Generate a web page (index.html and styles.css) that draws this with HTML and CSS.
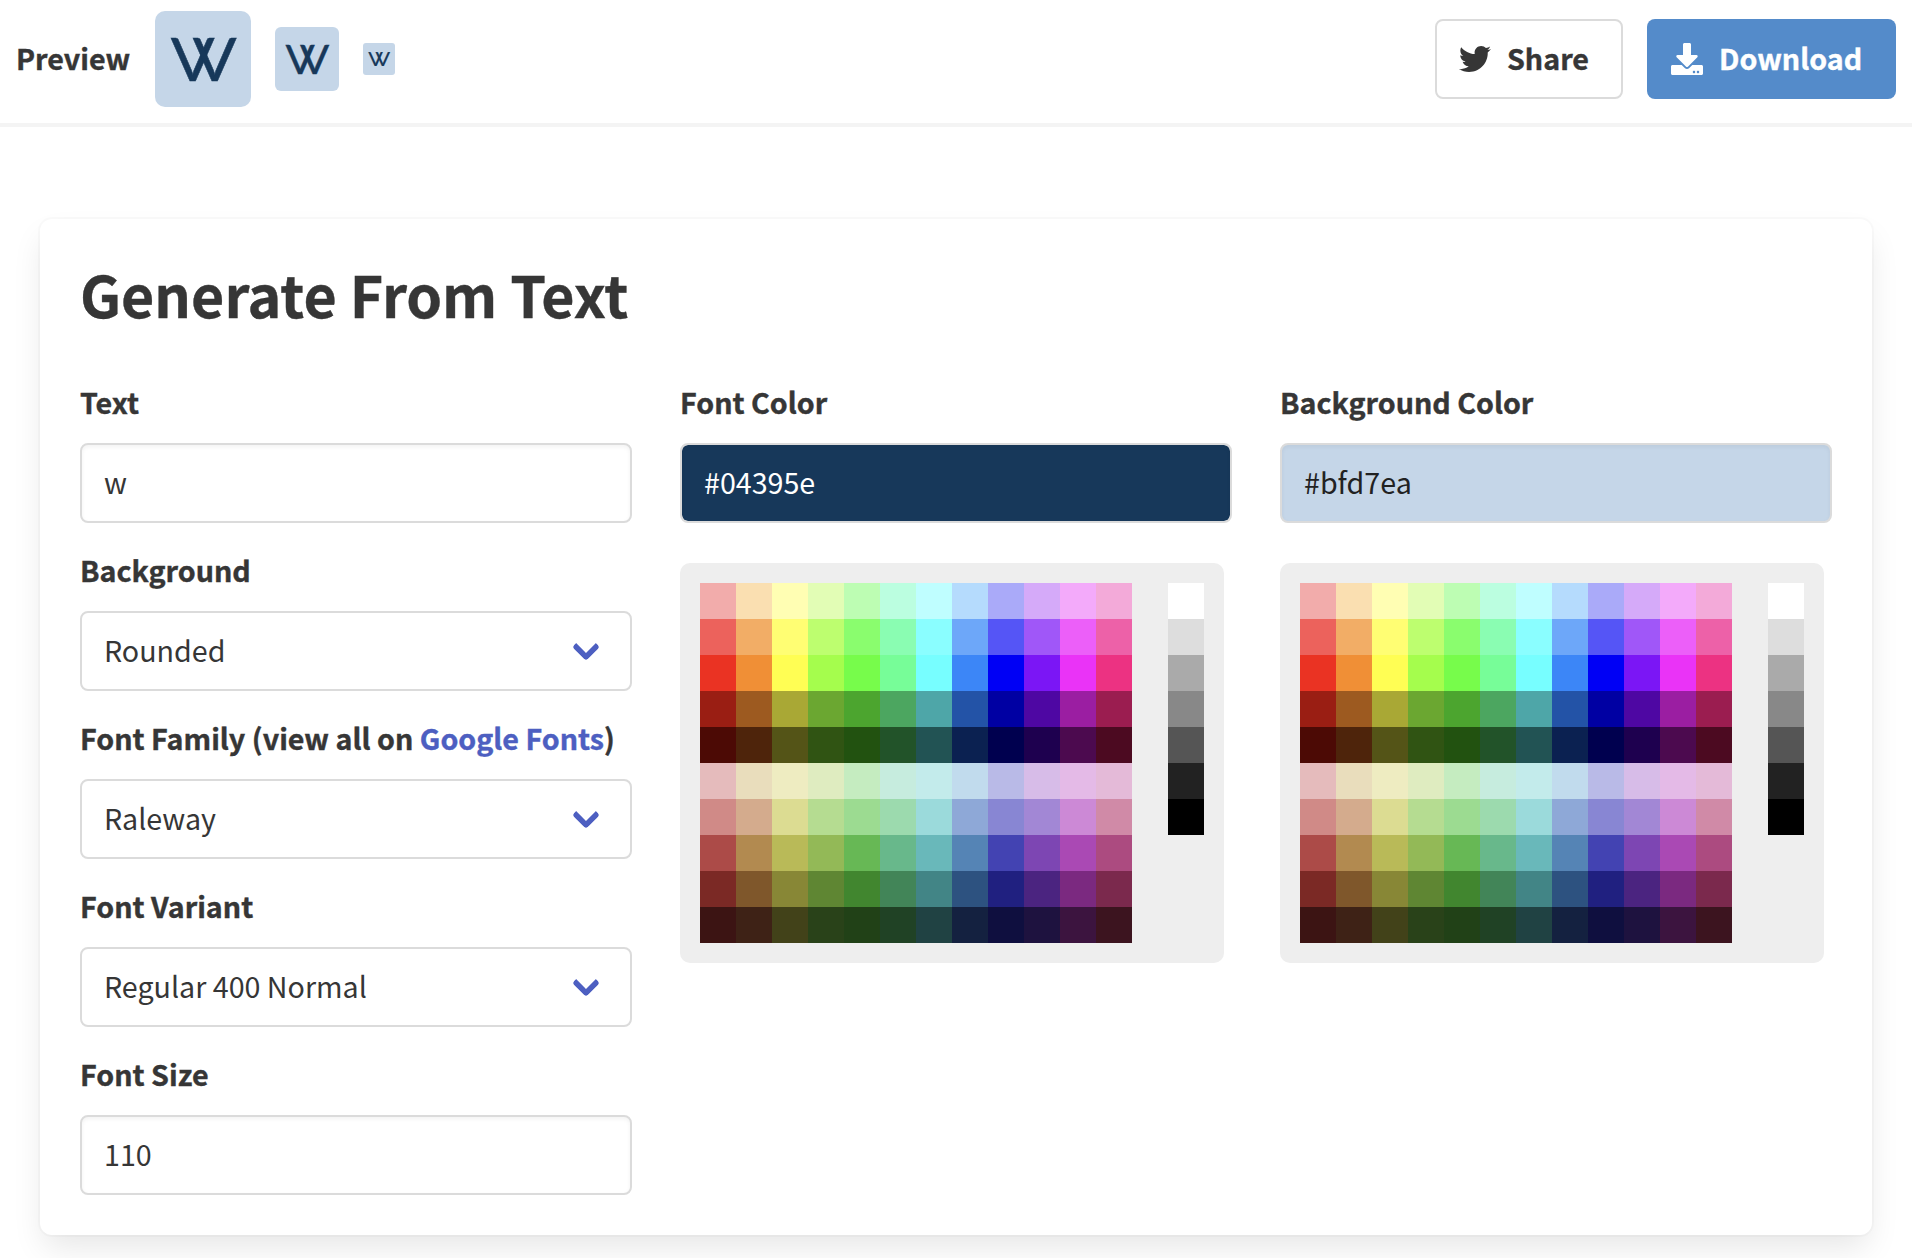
FILE: index.html
```html
<!DOCTYPE html>
<html lang="en">
<head>
<meta charset="utf-8">
<title>Generate From Text</title>
<link rel="stylesheet" href="styles.css">
</head>
<body>
<header class="toolbar">
  <span class="toolbar-label">Preview</span>
  <svg class="preview preview-lg" viewBox="0 0 96 96" role="img" aria-label="W"><text class="mark" x="14.5 34.9" y="70">VV</text></svg>
  <svg class="preview preview-md" viewBox="0 0 96 96" role="img" aria-label="W"><text class="mark" x="14.5 34.9" y="70">VV</text></svg>
  <svg class="preview preview-sm" viewBox="0 0 96 96" role="img" aria-label="W"><text class="mark" x="14.5 34.9" y="70">VV</text></svg>
  <div class="actions">
    <a class="button button-share"><svg class="icon" viewBox="0 0 512 512"><path d="M459.37 151.716c.325 4.548.325 9.097.325 13.645 0 138.72-105.583 298.558-298.558 298.558-59.452 0-114.68-17.219-161.137-47.106 8.447.974 16.568 1.299 25.34 1.299 49.055 0 94.213-16.568 130.274-44.832-46.132-.975-84.792-31.188-98.112-72.772 6.498.974 12.995 1.624 19.818 1.624 9.421 0 18.843-1.3 27.614-3.573-48.081-9.747-84.143-51.98-84.143-102.985v-1.299c13.969 7.797 30.214 12.67 47.431 13.319-28.264-18.843-46.781-51.005-46.781-87.391 0-19.492 5.197-37.36 14.294-52.954 51.655 63.675 129.3 105.258 216.365 109.807-1.624-7.797-2.599-15.918-2.599-24.04 0-57.828 46.782-104.934 104.934-104.934 30.213 0 57.502 12.67 76.67 33.137 23.715-4.548 46.456-13.32 66.599-25.34-7.798 24.366-24.366 44.833-46.132 57.827 21.117-2.273 41.584-8.122 60.426-16.243-14.292 20.791-32.161 39.308-52.628 54.253z"/></svg><span>Share</span></a>
    <a class="button button-download"><svg class="icon" viewBox="0 0 512 512"><path d="M216 0h80c13.3 0 24 10.7 24 24v168h87.7c17.8 0 26.7 21.5 14.1 34.1L269.7 378.3c-7.5 7.5-19.8 7.5-27.3 0L90.1 226.1c-12.6-12.6-3.7-34.1 14.1-34.1H192V24c0-13.3 10.7-24 24-24zm296 376v112c0 13.3-10.7 24-24 24H24c-13.3 0-24-10.7-24-24V376c0-13.3 10.7-24 24-24h146.7l49 49c20.1 20.1 52.5 20.1 72.6 0l49-49H488c13.3 0 24 10.7 24 24zm-124 88c0-11-9-20-20-20s-20 9-20 20 9 20 20 20 20-9 20-20zm64 0c0-11-9-20-20-20s-20 9-20 20 9 20 20 20 20-9 20-20z"/></svg><span>Download</span></a>
  </div>
</header>
<main class="box">
  <h1 class="title">Generate From Text</h1>
  <div class="columns">
    <div class="column">
      <div class="field"><label class="label">Text</label><div class="control input">w</div></div>
      <div class="field"><label class="label">Background</label><div class="control select">Rounded</div></div>
      <div class="field"><label class="label">Font Family (view all on <a class="link">Google Fonts</a>)</label><div class="control select">Raleway</div></div>
      <div class="field"><label class="label">Font Variant</label><div class="control select">Regular 400 Normal</div></div>
      <div class="field"><label class="label">Font Size</label><div class="control input">110</div></div>
    </div>
    <div class="column">
      <div class="field"><label class="label">Font Color</label><div class="control input input-dark">#04395e</div></div>
      <div class="picker"><div class="swatches"></div><div class="grays"></div></div>
    </div>
    <div class="column">
      <div class="field"><label class="label">Background Color</label><div class="control input input-light">#bfd7ea</div></div>
      <div class="picker"><div class="swatches"></div><div class="grays"></div></div>
    </div>
  </div>
</main>
<script src="palette.js"></script>
</body>
</html>
```
FILE: styles.css
```css
*, *::before, *::after { box-sizing: border-box; }
body {
  margin: 0;
  min-height: 1258px;
  padding-bottom: 23px;
  background: #fff;
  color: #363636;
  font-family: "Noto Sans CJK SC", "Noto Sans", sans-serif;
  font-size: 28.65px;
  line-height: 46px;
}

.toolbar {
  display: flex;
  align-items: center;
  gap: 24px;
  height: 127px;
  padding: 0 16px 5px;
  border-bottom: 4px solid #f4f4f4;
}
.toolbar-label, .button, .title, .label { font-weight: 700; -webkit-text-stroke: .4px currentColor; }
.toolbar-label { width: 115px; padding-bottom: 2px; }
.preview { display: block; flex: none; background: #c5d6e8; }
.preview-lg { width: 96px; height: 96px; border-radius: 10px; }
.preview-md { width: 64px; height: 64px; border-radius: 6px; }
.preview-sm { width: 32px; height: 32px; border-radius: 3px; }
.mark {
  fill: #17385a;
  stroke: #17385a;
  stroke-width: .5px;
  font-family: Lato, sans-serif;
  font-size: 60px;
  transform: scale(1.08, 1);
  transform-origin: 0 0;
}
.actions { display: flex; gap: 24px; margin-left: auto; }
.button {
  display: flex;
  align-items: center;
  gap: 16px;
  height: 80px;
  border-radius: 8px;
}
.button span { padding-bottom: 2px; }
.button-share { width: 188px; padding-left: 22px; border: 2px solid #dbdbdb; }
.button-download { width: 249px; padding-left: 24px; background: #548bca; color: #fff; }
.icon { width: 32px; height: 32px; fill: currentColor; }

.box {
  margin: 92px 40px 0;
  padding: 40px;
  border-radius: 12px;
  background: #fff;
  box-shadow: 0 16px 32px -4px rgba(10, 10, 10, .1), 0 0 0 2px rgba(10, 10, 10, .02);
}
.title { margin: 0 0 50px; font-size: 57.3px; line-height: 70px; }
.columns { display: grid; grid-template-columns: repeat(3, 1fr); gap: 48px; }
.column { display: flex; flex-direction: column; gap: 24px; }
.label { display: block; margin-bottom: 18px; white-space: nowrap; }
.link { color: #4d5fc1; }
.control {
  position: relative;
  height: 80px;
  padding: 14px 22px 16px;
  border: 2px solid #dbdbdb;
  border-radius: 8px;
}
.input { box-shadow: inset 0 2px 4px rgba(10, 10, 10, .05); }
.input-dark { background: #17385a; color: #fff; background-clip: padding-box; }
.input-light { background: #c5d6e8; color: #222; }
.select::after {
  content: "";
  position: absolute;
  top: 50%;
  right: 34px;
  width: 20px;
  height: 20px;
  margin-top: -14px;
  border: 6px solid #4d5fc1;
  border-top: 0;
  border-right: 0;
  border-radius: 4px;
  transform: rotate(-45deg);
}

.picker {
  display: flex;
  align-items: flex-start;
  gap: 36px;
  width: 544px;
  margin-top: 16px;
  padding: 20px;
  border-radius: 10px;
  background: #eee;
}
.swatches { display: grid; grid-template-columns: repeat(12, 36px); }
.grays { display: grid; grid-template-columns: 36px; }
.swatch { height: 36px; }
```
FILE: palette.js
```javascript
const colors = `
F2ACAB FADFB1 FFFEB3 E2FDB5 BDFDB3 BBFEE0 BFFEFF B5DBFD AAAAF9 D5AAF9 F3AAFA F3AAD9
EC625C F2AD66 FFFE73 BDFE6F 8AFD6E 8AFDB2 8AFEFF 6DA7F9 5555F6 A057F8 EC5FF9 ED61A8
EA3323 F08F36 FFFE54 A5FD4D 77FC4B 77FD98 77FEFF 3C86F7 0000F5 7B16F5 EA33F7 EC3282
9A1E13 9D5A20 A9A835 6BA731 4CA52F 4CA660 4EA6A8 2353A7 0000A3 4E07A3 9B1EA2 9B1D50
4C0A05 4E240B 545417 305413 225210 225329 225354 0B2151 00004F 1E004F 4C0A4F 4C0A21
E5BBBC E9DDBC EEECC1 DFECC0 C5ECC0 C6ECDE C3EBEB C1DBED B9BAE7 D7BCE8 E4BAE7 E4BAD8
D08A87 D4AB8D DCDC92 B5DC91 9CDB91 9CDAAE 9BDADB 8EA8D7 8886D3 A287D5 CC89D6 D08AA7
AC4B48 B28A50 B9BA58 93B957 67B855 68B88B 69B8BA 5584B5 4343B2 7D46B3 AA49B4 AC4B80
7B2925 7F572B 888736 5F8633 41862F 428558 428586 2D5280 202080 4B2480 7B2980 7B294D
3C1413 3E2216 424219 294219 214117 204225 204243 142140 0F0F3F 1E123F 3C143F 3C141F`;
const grays = 'FFFFFF DDDDDD AAAAAA 888888 555555 222222 000000';

function fill(selector, list) {
  document.querySelectorAll(selector).forEach(el => {
    list.trim().split(/\s+/).forEach(hex => {
      const cell = document.createElement('div');
      cell.className = 'swatch';
      cell.style.background = '#' + hex;
      el.append(cell);
    });
  });
}
fill('.swatches', colors);
fill('.grays', grays);
```
